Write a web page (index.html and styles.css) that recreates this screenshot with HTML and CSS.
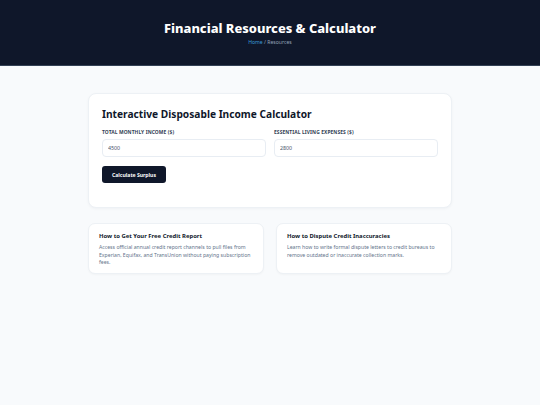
FILE: index.html
```html
<!DOCTYPE html>
<html lang="en">
<head>
<meta charset="utf-8">
<title>Financial Resources &amp; Calculator</title>
<link rel="stylesheet" href="styles.css">
</head>
<body>
<header class="hero">
  <h1 class="hero-title">Financial Resources &amp; Calculator</h1>
  <nav class="crumbs"><a href="#" class="crumb-link">Home</a> / Resources</nav>
</header>
<main class="content">
  <section class="calc-card">
    <h2 class="calc-title">Interactive Disposable Income Calculator</h2>
    <div class="field-row">
      <label class="field">
        <span class="field-label">Total Monthly Income ($)</span>
        <input class="field-input" type="text" value="4500">
      </label>
      <label class="field">
        <span class="field-label">Essential Living Expenses ($)</span>
        <input class="field-input" type="text" value="2800">
      </label>
    </div>
    <button class="calc-btn" type="button">Calculate Surplus</button>
  </section>
  <div class="guide-grid">
    <article class="guide-card">
      <h3 class="guide-title">How to Get Your Free Credit Report</h3>
      <p class="guide-text">Access official annual credit report channels to pull files from Experian, Equifax, and TransUnion without paying subscription fees.</p>
    </article>
    <article class="guide-card">
      <h3 class="guide-title">How to Dispute Credit Inaccuracies</h3>
      <p class="guide-text">Learn how to write formal dispute letters to credit bureaus to remove outdated or inaccurate collection marks.</p>
    </article>
  </div>
</main>
</body>
</html>
```

FILE: styles.css
```css
* { box-sizing: border-box; }
html, body { margin: 0; padding: 0; }
body {
  background: #f8fafc;
  font-family: "Noto Sans", "Open Sans", sans-serif;
  color: #0f172a;
  min-height: 405px;
}
.hero {
  background: #0f172a;
  height: 66px;
  border-bottom: 1px solid #334155;
  display: flex;
  flex-direction: column;
  align-items: center;
  padding-top: 19px;
}
.hero-title {
  margin: 0;
  color: #ffffff;
  font-size: 12.9px;
  font-weight: 800;
  line-height: 18px;
}
.crumbs {
  margin-top: 1px;
  font-size: 5.1px;
  line-height: 8px;
  color: #94a3b8;
}
.crumb-link { color: #3b9ad9; text-decoration: none; }
.content {
  width: 364px;
  margin: 27px auto 0;
}
.calc-card {
  background: #ffffff;
  border: 1px solid #edf1f5;
  border-radius: 8px;
  padding: 12px 13px 24px;
  box-shadow: 0 1px 3px rgba(15, 23, 42, 0.04);
}
.calc-title {
  margin: 0;
  font-size: 10.2px;
  font-weight: 700;
  line-height: 16px;
}
.field-row {
  display: grid;
  grid-template-columns: 1fr 1fr;
  gap: 8px;
  margin-top: 7px;
}
.field { display: flex; flex-direction: column; }
.field-label {
  font-size: 4.9px;
  font-weight: 700;
  text-transform: uppercase;
  letter-spacing: 0.1px;
  color: #334155;
  line-height: 7px;
  margin-bottom: 3px;
}
.field-input {
  height: 18px;
  border: 1px solid #e8edf3;
  border-radius: 4px;
  padding: 0 5px;
  font-family: inherit;
  font-size: 5.3px;
  color: #475569;
  background: #fff;
}
.calc-btn {
  display: block;
  margin-top: 9px;
  height: 17px;
  width: 64px;
  border: none;
  border-radius: 3px;
  background: #0f172a;
  color: #ffffff;
  font-family: inherit;
  font-size: 5.1px;
  font-weight: 700;
  padding: 0;
}
.guide-grid {
  display: grid;
  grid-template-columns: 1fr 1fr;
  gap: 12px;
  margin-top: 15px;
}
.guide-card {
  background: #ffffff;
  border: 1px solid #edf1f5;
  border-radius: 7px;
  padding: 8px 10px 6px;
  min-height: 51px;
  box-shadow: 0 1px 2px rgba(15, 23, 42, 0.03);
}
.guide-title {
  margin: 0;
  font-size: 5.9px;
  font-weight: 700;
  line-height: 9px;
  color: #0f172a;
}
.guide-text {
  margin: 3px 0 0;
  font-size: 5.15px;
  line-height: 7.5px;
  color: #64748b;
}
```
